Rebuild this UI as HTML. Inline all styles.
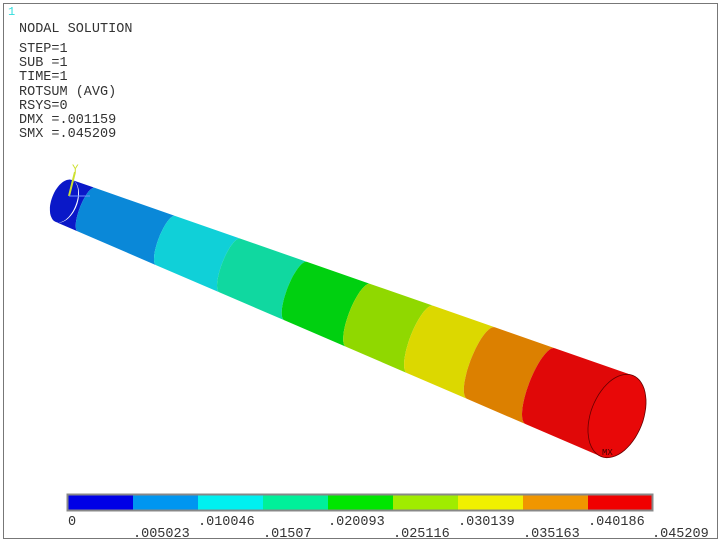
<!DOCTYPE html>
<html><head><meta charset="utf-8"><style>
html,body{margin:0;padding:0;background:#fff;width:721px;height:543px;overflow:hidden}
svg{display:block}
text{font-family:"Liberation Mono",monospace;font-size:13.5px;fill:#333}
</style></head><body>
<svg id="s" width="721" height="543" viewBox="0 0 721 543">
<rect x="3.5" y="3.5" width="714" height="535" fill="#fff" stroke="#777" stroke-width="1"/>
<text x="8" y="15" style="fill:#3dd;font-size:12px">1</text>
<text x="19" y="32">NODAL SOLUTION</text>
<text x="19" y="52">STEP=1</text>
<text x="19" y="66">SUB =1</text>
<text x="19" y="80">TIME=1</text>
<text x="19" y="95">ROTSUM   (AVG)</text>
<text x="19" y="109">RSYS=0</text>
<text x="19" y="123">DMX =.001159</text>
<text x="19" y="137">SMX =.045209</text>
<g id="tube"></g>
<line x1="69" y1="196" x2="75" y2="172" stroke="#cde030" stroke-width="2"/>
<line x1="69" y1="196" x2="90" y2="196" stroke="#7090ff" stroke-width="1"/>
<text x="72" y="172" style="fill:#cde030;font-size:11px">Y</text>
<text x="602" y="455" style="fill:#400;font-size:9px">MX</text>
<g id="leg"></g>
<rect x="67.5" y="494.5" width="585" height="16" fill="none" stroke="#888" stroke-width="2"/>
<text x="68" y="525">0</text>
<text x="133" y="537">.005023</text>
<text x="198" y="525">.010046</text>
<text x="263" y="537">.01507</text>
<text x="328" y="525">.020093</text>
<text x="393" y="537">.025116</text>
<text x="458" y="525">.030139</text>
<text x="523" y="537">.035163</text>
<text x="588" y="525">.040186</text>
<text x="652" y="537">.045209</text>
</svg>
<script>
var ns="http://www.w3.org/2000/svg";
var leg=document.getElementById('leg');
var lc=['#0000e6','#0096f0','#00f0f0','#00f09a','#00e600','#a0ec00','#f0f000','#f09600','#f00000'];
for(var i=0;i<9;i++){var r=document.createElementNS(ns,'rect');r.setAttribute('x',68+65*i);r.setAttribute('y',495);r.setAttribute('width',65.5);r.setAttribute('height',15);r.setAttribute('fill',lc[i]);leg.appendChild(r);}
var A=[64,201],B=[617,416],n=[-0.362,0.933],m=[0.933,0.362];
function c(t){return [A[0]+(B[0]-A[0])*t,A[1]+(B[1]-A[1])*t];}
function R(t){return 22.5+21*t;}
function ep(t,th,k){var p=c(t),r=R(t);return [p[0]-r*Math.cos(th)*n[0]+r*k*Math.sin(th)*m[0],p[1]-r*Math.cos(th)*n[1]+r*k*Math.sin(th)*m[1]];}
var g=document.getElementById('tube');
function poly(pts,fill,stroke){var p=document.createElementNS(ns,'polygon');p.setAttribute('points',pts.map(function(q){return q[0].toFixed(1)+','+q[1].toFixed(1)}).join(' '));p.setAttribute('fill',fill);if(stroke){p.setAttribute('stroke',stroke);p.setAttribute('stroke-width','0.8');}g.appendChild(p);}
var pts=[];for(var j=0;j<=60;j++)pts.push(ep(0,j*Math.PI*2/60,0.55));poly(pts,'#0a18c8');
var ts=[0,0.04,0.184,0.30,0.419,0.532,0.644,0.754,0.861,1];
var cols=['#0a18c8','#0a88d8','#10d0d8','#10d8a0','#00d010','#90d800','#dcd800','#dc8000','#e00808'];
function kk(i){return (i==0||i==9)?0.6:-0.28;}
for(var i=0;i<9;i++){var P=[];var N=30;
 for(var j=0;j<=N;j++)P.push(ep(ts[i+1],j*Math.PI/N,kk(i+1)));
 for(var j=N;j>=0;j--)P.push(ep(ts[i],j*Math.PI/N,kk(i)));
 poly(P,cols[i]);}
var P2=[];for(var j=0;j<=60;j++)P2.push(ep(1,j*Math.PI*2/60,0.6));poly(P2,'#e80808','#600');
</script>
</body></html>
